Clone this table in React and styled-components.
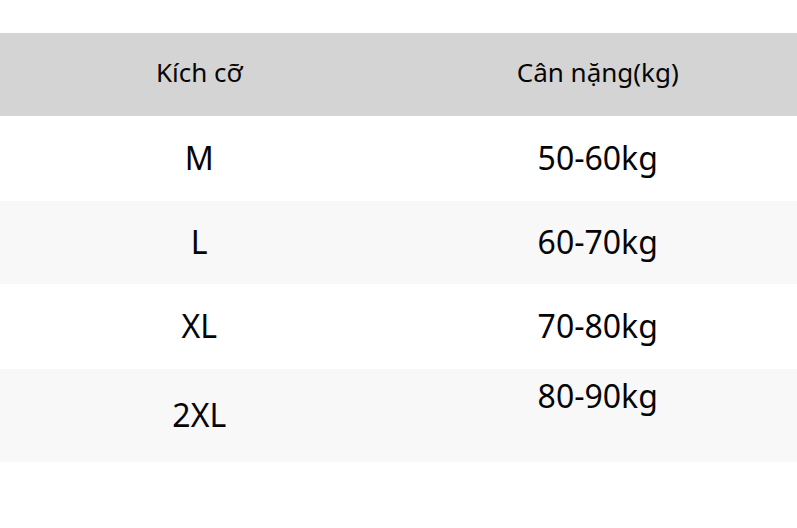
import React from 'react';
import styled, { createGlobalStyle } from 'styled-components';

const Global = createGlobalStyle`
  html, body { margin:0; padding:0; background:#fff; }
  body { font-family:"Noto Sans","Open Sans","DejaVu Sans",sans-serif; color:#050505; }
`;

const Page = styled.div`
  width:797px;
  height:528px;
  padding-top:33px;
  box-sizing:border-box;
`;

const Table = styled.div`
  display:grid;
  grid-template-columns:1fr 1fr;
`;

const Row = styled.div`
  display:contents;
`;

const Cell = styled.div`
  height:${p => p.$h}px;
  background:${p => p.$head ? '#d4d4d4' : p.$alt ? '#f8f8f8' : '#fff'};
  font-size:${p => p.$head ? 26 : 32}px;
  display:flex;
  justify-content:center;
  align-items:${p => p.$top ? 'flex-start' : 'center'};
  padding-top:${p => p.$top ? 5 : 0}px;
  padding-bottom:${p => p.$top ? 0 : p.$head ? 6 : 3}px;
  box-sizing:border-box;
  white-space:nowrap;
`;

const rows = [
  { size: 'M', weight: '50-60kg', h: 85 },
  { size: 'L', weight: '60-70kg', h: 83 },
  { size: 'XL', weight: '70-80kg', h: 85 },
  { size: '2XL', weight: '80-90kg', h: 93, top: true },
];

export default function App(){
  return (
    <Page>
      <Global />
      <Table>
        <Row>
          <Cell $head $h={83}>Kích cỡ</Cell>
          <Cell $head $h={83}>Cân nặng(kg)</Cell>
        </Row>
        {rows.map((r, i) => (
          <Row key={r.size}>
            <Cell $h={r.h} $alt={i % 2 === 1}>{r.size}</Cell>
            <Cell $h={r.h} $alt={i % 2 === 1} $top={r.top}>{r.weight}</Cell>
          </Row>
        ))}
      </Table>
    </Page>
  );
}
